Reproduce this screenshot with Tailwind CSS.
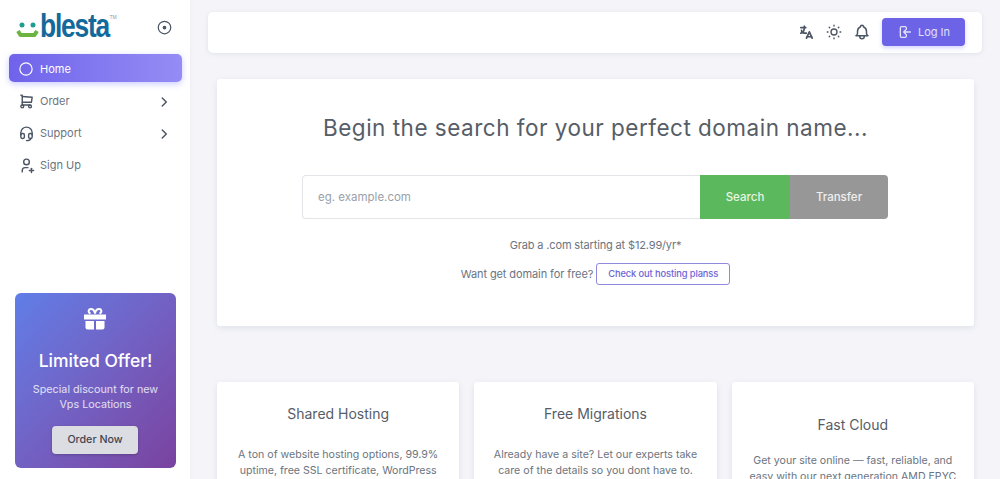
<!DOCTYPE html>
<html lang="en">

<head>
    <meta charset="UTF-8">
    <meta name="viewport" content="width=device-width, initial-scale=1.0">
    <title>Blesta - Home</title>
    <script src="https://cdn.jsdelivr.net/npm/@tailwindcss/browser@4"></script>
</head>

<body class="bg-[#f5f5f9] h-[479px] overflow-hidden font-['Inter',sans-serif] text-[#6b7480]">
    <div class="flex h-[479px]">
        <!-- sidebar -->
        <aside class="w-[190px] h-full shrink-0 bg-white flex flex-col shadow-[0_0_4px_rgba(67,89,113,0.08)]">
            <div class="h-[54px] flex items-center pl-[16px] pr-[19px]">
                <svg class="w-[23px] h-[19px] mt-[7px] shrink-0" viewBox="0 0 23 19">
                    <circle cx="6" cy="4" r="2.500" fill="#1f9d8f" />
                    <circle cx="17" cy="4" r="2.500" fill="#1f9d8f" />
                    <path d="M2 10l2.500 4h14l2.500 -4" fill="none" stroke="#6cb33f" stroke-width="4" stroke-linejoin="round" />
                </svg>
                <span class="font-['Liberation_Sans',sans-serif] text-[33px] leading-none text-[#14699b] tracking-[-1.5px] font-bold ml-[1px] -mt-[3px] scale-x-[0.8] origin-left">blesta</span>
                <span class="font-['Liberation_Sans',sans-serif] text-[5px] leading-none text-[#7d9fb4] -ml-[17px] -mt-[20px]">TM</span>
                <svg class="w-[15px] h-[15px] ml-auto -mr-[1px]" viewBox="0 0 24 24" fill="none" stroke="#4b5563" stroke-width="2">
                    <circle cx="12" cy="12" r="10" />
                    <circle cx="12" cy="12" r="2" fill="#4b5563" />
                </svg>
            </div>

            <nav class="pl-[9px] pr-[8px] flex flex-col text-[11px] text-[#6b7480]">
                <a href="#" class="h-[28px] pt-[2px] rounded-[5px] flex items-center pl-[10px] text-white bg-gradient-to-r from-[#6f63ea] to-[#968cf5] shadow-[0_2px_6px_rgba(105,108,255,0.35)]">
                    <svg class="w-[14px] h-[14px] mr-[7px]" viewBox="0 0 24 24" fill="none" stroke="currentColor" stroke-width="2">
                        <circle cx="12" cy="12" r="10.500" />
                    </svg>
                    Home
                </a>
                <a href="#" class="h-[28px] pt-[3px] mt-[4px] flex items-center pl-[9px] pr-[11px]">
                    <svg class="w-[17px] h-[17px] mr-[5px]" viewBox="0 0 24 24" fill="none" stroke="#4b5563" stroke-width="2" stroke-linecap="round" stroke-linejoin="round">
                        <path d="M6 19m-2 0a2 2 0 1 0 4 0a2 2 0 1 0 -4 0" />
                        <path d="M17 19m-2 0a2 2 0 1 0 4 0a2 2 0 1 0 -4 0" />
                        <path d="M17 17h-11v-14h-2" />
                        <path d="M6 5l14 1l-1 7h-13" />
                    </svg>
                    Order
                    <svg class="w-[14px] h-[14px] ml-auto" viewBox="0 0 24 24" fill="none" stroke="#4b5563" stroke-width="2.500" stroke-linecap="round" stroke-linejoin="round">
                        <path d="M9 5l7 7l-7 7" />
                    </svg>
                </a>
                <a href="#" class="h-[28px] pt-[3px] mt-[4px] flex items-center pl-[9px] pr-[11px]">
                    <svg class="w-[17px] h-[17px] mr-[5px]" viewBox="0 0 24 24" fill="none" stroke="#4b5563" stroke-width="2" stroke-linecap="round" stroke-linejoin="round">
                        <path d="M4 14v-3a8 8 0 1 1 16 0v3" />
                        <path d="M18 19c0 1.657 -2.686 3 -6 3" />
                        <path d="M4 14a2 2 0 0 1 2 -2h1a2 2 0 0 1 2 2v3a2 2 0 0 1 -2 2h-1a2 2 0 0 1 -2 -2v-3z" />
                        <path d="M15 14a2 2 0 0 1 2 -2h1a2 2 0 0 1 2 2v3a2 2 0 0 1 -2 2h-1a2 2 0 0 1 -2 -2v-3z" />
                    </svg>
                    Support
                    <svg class="w-[14px] h-[14px] ml-auto" viewBox="0 0 24 24" fill="none" stroke="#4b5563" stroke-width="2.500" stroke-linecap="round" stroke-linejoin="round">
                        <path d="M9 5l7 7l-7 7" />
                    </svg>
                </a>
                <a href="#" class="h-[28px] pt-[3px] mt-[4px] flex items-center pl-[9px] pr-[11px]">
                    <svg class="w-[17px] h-[17px] mr-[5px]" viewBox="0 0 24 24" fill="none" stroke="#4b5563" stroke-width="2" stroke-linecap="round" stroke-linejoin="round">
                        <path d="M8 7a4 4 0 1 0 8 0a4 4 0 0 0 -8 0" />
                        <path d="M16 19h6" />
                        <path d="M19 16v6" />
                        <path d="M6 21v-2a4 4 0 0 1 4 -4h4" />
                    </svg>
                    Sign Up
                </a>
            </nav>

            <div class="mt-auto mb-[11px] ml-[15px] mr-[14px] h-[175px] rounded-[6px] bg-gradient-to-br from-[#5f7ee8] to-[#7a429f] text-white flex flex-col items-center pt-[14px]">
                <svg class="w-[24px] h-[24px] -ml-[1px]" viewBox="0 0 24 24" fill="#fff">
                    <path d="M1 7.500h22v5h-22z" />
                    <path d="M2.500 14h8.500v8.500h-6.500a2 2 0 0 1 -2 -2z" />
                    <path d="M13 14h8.500v6.500a2 2 0 0 1 -2 2h-6.500z" />
                    <path d="M7.500 6.500c-3 -1.500 -2 -4.500 0.500 -4.500c2 0 3.500 2 4 4.500c0.500 -2.500 2 -4.500 4 -4.500c2.500 0 3.500 3 0.500 4.500" fill="none" stroke="#fff" stroke-width="2" />
                </svg>
                <h3 class="mt-[18px] text-[17.500px] leading-[24px] font-medium">Limited Offer!</h3>
                <p class="mt-[9px] text-[10.750px] leading-[15px] text-center text-white/80">Special discount for new<br>Vps Locations</p>
                <button class="mt-[14px] self-start ml-[37px] w-[86px] h-[28px] rounded-[4px] bg-[#dcdce3] text-[#3f4650] text-[10.700px] font-medium shadow-[0_1px_3px_rgba(0,0,0,0.2)]">Order Now</button>
            </div>
        </aside>

        <!-- main -->
        <main class="flex-1 min-w-0">
            <header class="mt-[12px] mx-[18px] h-[41px] pb-[1px] bg-white rounded-[5px] shadow-[0_1px_5px_rgba(67,89,113,0.12)] flex items-center justify-end pr-[17px]">
                <svg class="w-[17px] h-[17px] text-[#4b5563]" viewBox="0 0 24 24" fill="none" stroke="currentColor" stroke-width="2.400" stroke-linecap="round" stroke-linejoin="round">
                    <path d="M4 5h7" />
                    <path d="M9 3v2c0 4.418 -2.239 8 -5 8" />
                    <path d="M5 9c0 2.144 2.952 3.908 6.700 4" />
                    <path d="M12 20l4 -9l4 9" />
                    <path d="M19.100 18h-6.200" />
                </svg>
                <svg class="w-[18px] h-[18px] ml-[10px] text-[#4b5563]" viewBox="0 0 24 24" fill="none" stroke="currentColor" stroke-width="1.800" stroke-linecap="round" stroke-linejoin="round">
                    <path d="M12 12m-4 0a4 4 0 1 0 8 0a4 4 0 1 0 -8 0" />
                    <path d="M3 12h1m8 -9v1m8 8h1m-9 8v1m-6.400 -15.400l.7 .7m12.100 -.7l-.7 .7m0 11.400l.7 .7m-12.100 -.7l-.7 .7" />
                </svg>
                <svg class="w-[18px] h-[18px] ml-[10px] text-[#4b5563]" viewBox="0 0 24 24" fill="none" stroke="currentColor" stroke-width="2" stroke-linecap="round" stroke-linejoin="round">
                    <path d="M10 5a2 2 0 1 1 4 0a7 7 0 0 1 4 6v3a4 4 0 0 0 2 3h-16a4 4 0 0 0 2 -3v-3a7 7 0 0 1 4 -6" />
                    <path d="M9 17v1a3 3 0 0 0 6 0v-1" />
                </svg>
                <button class="ml-[11px] w-[83px] h-[28px] rounded-[4px] bg-[#6c63e6] text-white/80 text-[11px] flex items-center justify-center shadow-[0_2px_4px_rgba(105,108,255,0.3)]">
                    <svg class="w-[16px] h-[16px] mr-[5px]" viewBox="0 0 24 24" fill="none" stroke="currentColor" stroke-width="2" stroke-linecap="round" stroke-linejoin="round">
                        <path d="M14 8v-2a2 2 0 0 0 -2 -2h-5a2 2 0 0 0 -2 2v12a2 2 0 0 0 2 2h5a2 2 0 0 0 2 -2v-2" />
                        <path d="M20 12h-10l3 -3m0 6l-3 -3" />
                    </svg>
                    Log In
                </button>
            </header>

            <div class="ml-[27px] mr-[26px]">
                <section class="mt-[26px] h-[247px] bg-white rounded-[3px] shadow-[0_2px_6px_rgba(67,89,113,0.12)] flex flex-col items-center pt-[34px]">
                    <h1 class="text-[22.500px] leading-[30px] text-[#565d67] tracking-[0.5px]">Begin the search for your perfect domain name...</h1>
                    <div class="mt-[32px] self-start ml-[85px] w-[586px] h-[44px] flex text-[11.500px]">
                        <input type="text" placeholder="eg. example.com" class="flex-1 min-w-0 border border-[#e2e4e8] border-r-0 rounded-l-[4px] pl-[15px] pt-[2px] outline-none placeholder:text-[#9aa1a9]">
                        <button class="w-[90px] pt-[2px] bg-[#5cb85c] text-white/85 font-medium">Search</button>
                        <button class="w-[98px] pt-[2px] bg-[#979797] text-white/85 font-medium rounded-r-[4px]">Transfer</button>
                    </div>
                    <p class="mt-[18px] text-[11px] tracking-[-0.150px] leading-[16px]">Grab a .com starting at $12.99/yr*</p>
                    <div class="mt-[10px] flex items-center text-[11px] tracking-[-0.100px]">
                        <span>Want get domain for free?</span>
                        <a href="#" class="ml-[3px] w-[134px] h-[22px] border border-[#8f88dd] rounded-[3px] text-[#6c63d6] text-[9.300px] font-medium flex items-center justify-center">Check out hosting planss</a>
                    </div>
                </section>

                <section class="mt-[56px] grid grid-cols-3 gap-[15px]">
                    <div class="h-[120px] bg-white rounded-[3px] shadow-[0_2px_6px_rgba(67,89,113,0.12)] text-center pt-[22px]">
                        <h2 class="text-[14px] leading-[20px] text-[#565d67]">Shared Hosting</h2>
                        <p class="mt-[23px] text-[10.600px] leading-[15.500px]">A ton of website hosting options, 99.9%<br>uptime, free SSL certificate, WordPress</p>
                    </div>
                    <div class="h-[120px] bg-white rounded-[3px] shadow-[0_2px_6px_rgba(67,89,113,0.12)] text-center pt-[22px]">
                        <h2 class="text-[14px] leading-[20px] text-[#565d67]">Free Migrations</h2>
                        <p class="mt-[23px] text-[10.600px] leading-[15.500px]">Already have a site? Let our experts take<br>care of the details so you dont have to.</p>
                    </div>
                    <div class="h-[120px] bg-white rounded-[3px] shadow-[0_2px_6px_rgba(67,89,113,0.12)] text-center pt-[33px]">
                        <h2 class="text-[14px] leading-[20px] text-[#565d67]">Fast Cloud</h2>
                        <p class="mt-[18px] text-[10.600px] leading-[15.500px]">Get your site online — fast, reliable, and<br>easy with our next generation AMD EPYC</p>
                    </div>
                </section>
            </div>
        </main>
    </div>
</body>

</html>
